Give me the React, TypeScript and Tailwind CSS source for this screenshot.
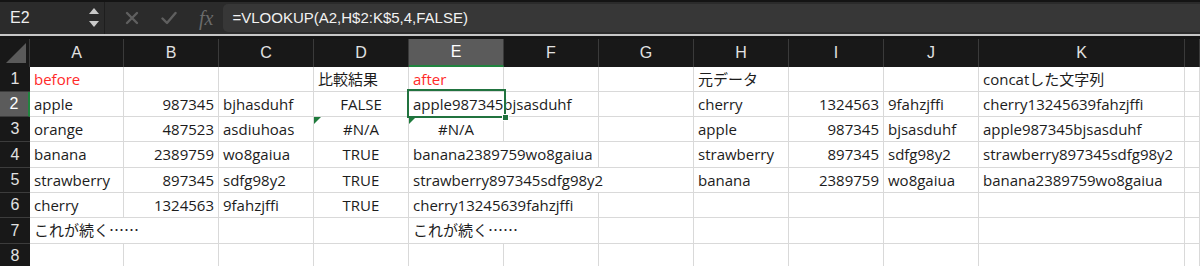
import { Fragment } from 'react';

type C = [string, number?, ('l' | 'r' | 'c')?, boolean?];

const gridCols =
  'grid grid-cols-[30px_94px_95px_95px_95px_95px_95px_95px_95px_95px_95px_206px_1fr]';

const letters = ['A', 'B', 'C', 'D', 'E', 'F', 'G', 'H', 'I', 'J', 'K', ''];

const spanClass: Record<number, string> = { 1: '', 2: 'col-span-2', 3: 'col-span-3' };

const rows: { h: string; cells: C[] }[] = [
  {
    h: 'h-[25px]',
    cells: [['before', 1, 'l', true], [''], [''], ['比較結果'], ['after', 1, 'l', true], [''], [''], ['元データ'], [''], [''], ['concatした文字列'], ['']],
  },
  {
    h: 'h-[25px]',
    cells: [['apple'], ['987345', 1, 'r'], ['bjhasduhf'], ['FALSE', 1, 'c'], ['apple987345bjsasduhf', 2], [''], ['cherry'], ['1324563', 1, 'r'], ['9fahzjffi'], ['cherry13245639fahzjffi'], ['']],
  },
  {
    h: 'h-[25px]',
    cells: [['orange'], ['487523', 1, 'r'], ['asdiuhoas'], ['#N/A', 1, 'c'], ['#N/A', 1, 'c'], [''], [''], ['apple'], ['987345', 1, 'r'], ['bjsasduhf'], ['apple987345bjsasduhf'], ['']],
  },
  {
    h: 'h-[26px]',
    cells: [['banana'], ['2389759', 1, 'r'], ['wo8gaiua'], ['TRUE', 1, 'c'], ['banana2389759wo8gaiua', 2], [''], ['strawberry'], ['897345', 1, 'r'], ['sdfg98y2'], ['strawberry897345sdfg98y2'], ['']],
  },
  {
    h: 'h-[25px]',
    cells: [['strawberry'], ['897345', 1, 'r'], ['sdfg98y2'], ['TRUE', 1, 'c'], ['strawberry897345sdfg98y2', 3], ['banana'], ['2389759', 1, 'r'], ['wo8gaiua'], ['banana2389759wo8gaiua'], ['']],
  },
  {
    h: 'h-[25px]',
    cells: [['cherry'], ['1324563', 1, 'r'], ['9fahzjffi'], ['TRUE', 1, 'c'], ['cherry13245639fahzjffi', 2], [''], [''], [''], [''], [''], ['']],
  },
  {
    h: 'h-[26px]',
    cells: [['これが続く……', 2], [''], [''], ['これが続く……', 2], [''], [''], [''], [''], [''], ['']],
  },
  {
    h: 'h-[22px]',
    cells: [[''], [''], [''], [''], [''], [''], [''], [''], [''], [''], [''], ['']],
  },
];

function ErrorMark() {
  return (
    <svg className="absolute left-0 top-0" width="7" height="7" viewBox="0 0 7 7">
      <polygon points="0,0 7,0 0,7" fill="#1e7b3c" />
    </svg>
  );
}

function Cell({ c, mark }: { c: C; mark?: boolean }) {
  const [text, span = 1, align = 'l', red = false] = c;
  const jp = /[\u3040-\u30ff\u4e00-\u9fff]/.test(text) && !/[a-z]/.test(text);
  return (
    <div
      className={`relative flex items-center whitespace-nowrap border-r border-b border-[#d9d9d9] px-[4px] ${spanClass[span]} ${
        align === 'r' ? 'justify-end' : align === 'c' ? 'justify-center' : 'justify-start'
      } ${red ? 'text-[#ff2a2a]' : 'text-[#1c1c1c]'} ${jp ? "font-['Noto_Sans_CJK_JP',sans-serif]" : ''}`}
    >
      {mark && <ErrorMark />}
      {text}
    </div>
  );
}

export default function App() {
  return (
    <div className="w-[1200px] h-[266px] overflow-hidden bg-white font-['Open_Sans','Noto_Sans_CJK_JP',sans-serif] text-[15px]">
      {/* formula bar */}
      <div className="h-[34px] flex items-stretch bg-[#2b2b2b] border-t-2 border-[#141414]">
        <div className="w-[105px] flex items-center justify-between pl-[10px] pr-[3px] border-r border-[#1e1e1e]">
          <span className="text-[#eeeeee] text-[16px] font-['Liberation_Sans',sans-serif]">E2</span>
          <svg width="14" height="22" viewBox="0 0 14 22">
            <polygon points="7,1 12,7 2,7" fill="#c9c9c9" />
            <polygon points="2,14 12,14 7,20" fill="#c9c9c9" />
          </svg>
        </div>
        <div className="flex items-center gap-[22px] pl-[20px] pr-[10px]">
          <svg width="14" height="14" viewBox="0 0 14 14">
            <path d="M2 2 L12 12 M12 2 L2 12" stroke="#5f5f5f" strokeWidth="2.4" strokeLinecap="round" />
          </svg>
          <svg width="16" height="14" viewBox="0 0 16 14">
            <path d="M1.5 7.5 L6 12 L14.5 2" stroke="#5f5f5f" strokeWidth="2.4" fill="none" strokeLinecap="round" strokeLinejoin="round" />
          </svg>
          <span className="text-[#6a6a6a] text-[20px] italic font-['Liberation_Serif',serif] leading-none">fx</span>
        </div>
        <div className="flex-1 my-[2px] rounded-l-[5px] bg-[#373737] flex items-center pl-[9px] text-[#f2f2f2] text-[15px] font-['Liberation_Sans',sans-serif] font-medium">
          =VLOOKUP(A2,H$2:K$5,4,FALSE)
        </div>
      </div>
      <div className="h-[2px] bg-[#c6c6c6]" />
      <div className="h-[3px] bg-[#151515]" />

      {/* sheet */}
      <div className="relative">
        <div className={`${gridCols} h-[28px] bg-[#181818] text-[#e2e2e2] text-[16px] font-['Liberation_Sans',sans-serif]`}>
          <div className="relative border-r border-[#3a3a3a]">
            <svg className="absolute right-[3px] bottom-[4px]" width="20" height="20" viewBox="0 0 20 20">
              <polygon points="20,0 20,20 0,20" fill="#5a5a5a" />
            </svg>
          </div>
          {letters.map((l) =>
            l === 'E' ? (
              <div key={l} className="flex items-center justify-center bg-[#5b5b5b] border-r border-[#3a3a3a] border-b-2 border-b-[#21843f] text-white">
                {l}
              </div>
            ) : (
              <div key={l || 'last'} className="flex items-center justify-center border-r border-[#3a3a3a]">
                {l}
              </div>
            )
          )}
        </div>

        {rows.map((r, i) => (
          <div key={i} className={`${gridCols} ${r.h}`}>
            <div
              className={`flex items-center justify-center text-[16px] font-['Liberation_Sans',sans-serif] border-b border-[#3c3c3c] ${
                i === 1 ? 'bg-[#5b5b5b] text-white border-r-2 border-r-[#21843f]' : 'bg-[#181818] text-[#e2e2e2]'
              }`}
            >
              {i + 1}
            </div>
            {r.cells.map((c, j) => (
              <Fragment key={j}>
                <Cell c={c} mark={i === 2 && (j === 3 || j === 4)} />
              </Fragment>
            ))}
          </div>
        ))}

        {/* active cell */}
        <div className="absolute left-[407px] top-[50px] w-[99px] h-[29px] border-2 border-[#21733f] pointer-events-none">
          <div className="absolute right-[-5px] bottom-[-5px] w-[7px] h-[7px] bg-[#21733f] border border-white" />
        </div>
      </div>
    </div>
  );
}
